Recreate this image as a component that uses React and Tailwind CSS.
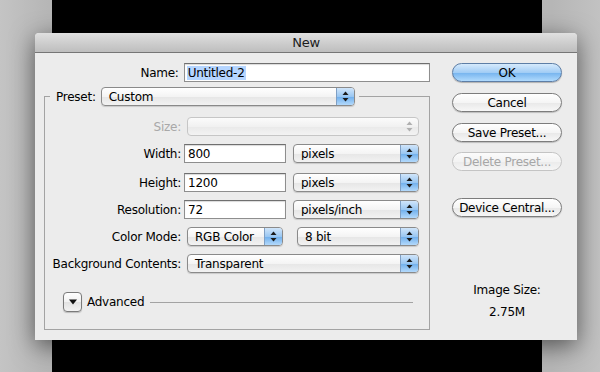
import React from 'react'

const font = { fontFamily: '"DejaVu Sans", "Liberation Sans", sans-serif' }

const Arrows = ({ disabled }) => (
  <svg width="7" height="11" viewBox="0 0 7 11">
    <path d="M3.5 0.5 L6.5 4 L0.5 4 Z" fill={disabled ? '#b0b0b0' : '#1a1a1a'} />
    <path d="M0.5 7 L6.5 7 L3.5 10.5 Z" fill={disabled ? '#b0b0b0' : '#1a1a1a'} />
  </svg>
)

const Popup = ({ label, className = '', disabled }) => {
  if (disabled) {
    return (
      <div className={"flex h-[19px] items-center rounded-[4px] border border-[#c6c6c6] bg-[linear-gradient(#fbfbfb,#f1f1f1_50%,#e9e9e9_51%,#f3f3f3)] " + className}>
        <span className="flex-1" />
        <span className="flex w-[18px] justify-center">
          <Arrows disabled />
        </span>
      </div>
    )
  }
  return (
    <div className={"flex h-[19px] items-center overflow-hidden rounded-[4px] border border-[#8a8a8a] bg-[linear-gradient(#ffffff,#f4f4f4_50%,#e6e6e6_51%,#f2f2f2)] shadow-[0_1px_1px_rgba(0,0,0,0.15)] " + className}>
      <span className="flex-1 truncate pl-[7px] text-[12px] leading-none text-black">{label}</span>
      <span className="flex h-full w-[18px] items-center justify-center border-l border-[#7f9fc4] bg-[linear-gradient(#d0e5fa,#9ac7f2_50%,#6eaeec_51%,#b3d9fb)]">
        <Arrows />
      </span>
    </div>
  )
}

const Field = ({ value, className = '' }) => (
  <div className={"flex h-[19px] items-center border border-[#8e8e8e] border-t-[#6f6f6f] bg-white pl-[3px] text-[12px] leading-none text-black shadow-[inset_0_1px_1px_rgba(0,0,0,0.15)] " + className}>
    {value}
  </div>
)

const Row = ({ label, disabled, children, className = '' }) => (
  <div className={"flex h-[19px] items-center " + className}>
    <span className={"w-[136px] text-right text-[12px] " + (disabled ? 'text-[#a8a8a8]' : 'text-black')}>{label}</span>
    <div className="ml-[3px] flex items-center">{children}</div>
  </div>
)

const Button = ({ children, primary, disabled, className = '' }) => {
  let look = 'border-[#7c7c7c] bg-[linear-gradient(#ffffff,#f5f5f5_50%,#e8e8e8_51%,#f7f7f7)] text-black shadow-[0_1px_1px_rgba(0,0,0,0.2)]'
  if (primary) look = 'border-[#5d7ea6] bg-[linear-gradient(#d6eafc,#a2cdf5_50%,#74b3ee_51%,#b0dafd)] text-black shadow-[0_1px_1px_rgba(0,0,0,0.25)]'
  if (disabled) look = 'border-[#c4c4c4] bg-[linear-gradient(#fbfbfb,#f3f3f3_50%,#ebebeb_51%,#f5f5f5)] text-[#a6a6a6]'
  return (
    <div className={"flex h-[19px] w-[110px] items-center justify-center rounded-full border text-[12px] leading-none " + look + ' ' + className}>
      {children}
    </div>
  )
}

export default function App() {
  return (
    <div className="relative h-[372px] w-[600px] overflow-hidden bg-[linear-gradient(90deg,#c4c4c4,#b6b6b6_8%,#bababa_50%,#b6b6b6_92%,#c2c2c2)] tracking-[-0.25px]" style={font}>
      <div className="ml-[52px] h-full w-[490px] bg-black" />

      <div className="absolute left-[35px] top-[33px] flex h-[307px] w-[542px] flex-col overflow-hidden rounded-t-[4px] bg-[#ececec] shadow-[0_6px_24px_rgba(0,0,0,0.55)]">
        <div className="flex h-[20px] items-center justify-center border-b border-[#767676] bg-[linear-gradient(#e0e0e0,#cbcbcb_60%,#bebebe)] text-[13px] text-[#1c1c1c]">
          New
        </div>

        <div className="flex flex-1 pl-[9px]">
          <div className="w-[386px] pt-[10px]">
            <div className="flex h-[19px] items-center">
              <span className="w-[135px] text-right text-[12px] text-black">Name:</span>
              <div className="ml-[5px] flex h-[19px] w-[247px] items-center border border-[#8e8e8e] border-t-[#6f6f6f] bg-white pl-[2px] text-[12px] leading-none text-black shadow-[inset_0_1px_1px_rgba(0,0,0,0.15)]">
                <span className="bg-[#b5d5ff] px-[1px] py-[1px]">Untitled-2</span>
              </div>
            </div>

            <fieldset className="mt-[5px] w-[386px] border border-[#a3a3a3] pb-[17px]">
              <legend className="ml-[5px] pl-[6px] pr-[4px]">
                <div className="flex items-center">
                  <span className="text-[12px] text-black">Preset:</span>
                  <Popup label="Custom" className="ml-[5px] w-[254px]" />
                </div>
              </legend>

              <Row label="Size:" disabled className="mt-[11px]">
                <Popup disabled className="ml-[3px] w-[232px]" />
              </Row>
              <Row label="Width:" className="mt-[8px]">
                <Field value="800" className="w-[102px]" />
                <Popup label="pixels" className="ml-[7px] w-[126px]" />
              </Row>
              <Row label="Height:" className="mt-[10px]">
                <Field value="1200" className="w-[102px]" />
                <Popup label="pixels" className="ml-[7px] w-[126px]" />
              </Row>
              <Row label="Resolution:" className="mt-[8px]">
                <Field value="72" className="w-[102px]" />
                <Popup label="pixels/inch" className="ml-[7px] w-[126px]" />
              </Row>
              <Row label="Color Mode:" className="mt-[8px]">
                <Popup label="RGB Color" className="ml-[3px] w-[96px]" />
                <Popup label="8 bit" className="ml-[14px] w-[122px]" />
              </Row>
              <Row label="Background Contents:" className="mt-[8px]">
                <Popup label="Transparent" className="ml-[3px] w-[232px]" />
              </Row>

              <div className="mt-[19px] flex h-[20px] items-center pl-[18px] pr-[16px]">
                <div className="flex h-[20px] w-[19px] items-center justify-center rounded-[4px] border border-[#7a7a7a] bg-[linear-gradient(#ffffff,#f1f1f1_50%,#e2e2e2_51%,#f2f2f2)] shadow-[0_1px_1px_rgba(0,0,0,0.2)]">
                  <svg width="8" height="6" viewBox="0 0 8 6">
                    <path d="M0 0.5 L8 0.5 L4 5.5 Z" fill="#111" />
                  </svg>
                </div>
                <span className="ml-[5px] text-[12px] text-black">Advanced</span>
                <div className="ml-[6px] h-px flex-1 bg-[#a3a3a3]" />
              </div>
            </fieldset>
          </div>

          <div className="ml-[22px] flex w-[110px] flex-col items-center pt-[10px]">
            <Button primary>OK</Button>
            <Button className="mt-[11px]">Cancel</Button>
            <Button className="mt-[11px]">Save Preset...</Button>
            <Button disabled className="mt-[10px]">Delete Preset...</Button>
            <Button className="mt-[27px]">Device Central...</Button>
            <span className="mt-[66px] text-[12px] leading-[15px] text-black">Image Size:</span>
            <span className="mt-[7px] text-[12px] leading-[15px] text-black">2.75M</span>
          </div>
        </div>
      </div>
    </div>
  )
}
